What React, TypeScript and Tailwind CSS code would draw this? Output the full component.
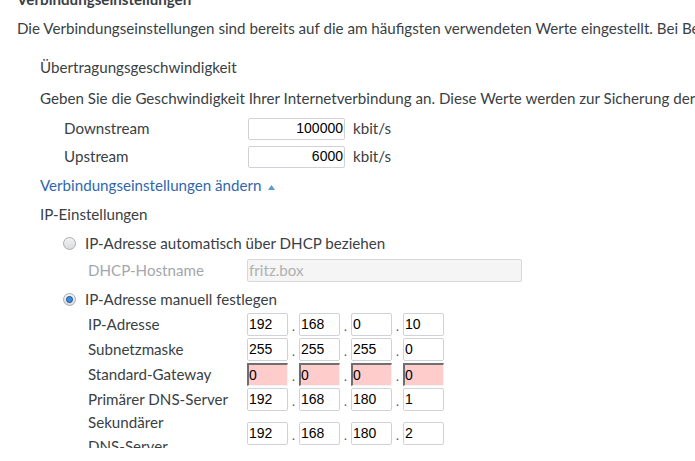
const ipRows = [
  { label: "IP-Adresse", values: ["192", "168", "0", "10"] },
  { label: "Subnetzmaske", values: ["255", "255", "255", "0"] },
  { label: "Standard-Gateway", values: ["0", "0", "0", "0"], invalid: true },
  { label: "Primärer DNS-Server", values: ["192", "168", "180", "1"] },
];

function Radio({ checked }: { checked?: boolean }) {
  return (
    <span className="flex h-[13px] w-[13px] shrink-0 items-center justify-center rounded-full border border-[#a9adb1] bg-gradient-to-b from-[#f2f2f2] to-[#d9dbdd]">
      {checked ? (
        <span className="h-[7px] w-[7px] rounded-full border border-[#1d4f86] bg-[#3a8ee6]" />
      ) : null}
    </span>
  );
}

function IpInputs({ values, invalid }: { values: string[]; invalid?: boolean }) {
  return (
    <div className="flex items-end font-['Liberation_Sans',sans-serif] text-[14px] text-black">
      {values.map((v, i) => (
        <div key={i} className="flex items-end">
          {i > 0 ? <span className="w-[11px] pb-[3px] text-center leading-none text-[#555]">.</span> : null}
          <div
            className={
              invalid
                ? "flex h-[23px] w-[41px] items-center border-t-2 border-l-2 border-r border-b border-t-[#6f6f6f] border-l-[#6f6f6f] border-r-[#f4f4f4] border-b-[#f4f4f4] bg-[#ffcccc] pl-0"
                : "flex h-[23px] w-[41px] items-center rounded-[2px] border border-[#cfd3d7] bg-white pl-[1px]"
            }
          >
            {v}
          </div>
        </div>
      ))}
    </div>
  );
}

export default function App() {
  return (
    <div className="h-[461px] w-[695px] overflow-hidden bg-white">
      <div className="h-[448px] overflow-hidden pl-[17px] font-['Lato',sans-serif] text-[15.15px] text-[#3a4044]">
        <div className="-mt-[11px] h-[20px] whitespace-nowrap font-bold leading-[20px]">Verbindungseinstellungen</div>
        <div className="mt-[9px] h-[20px] whitespace-nowrap leading-[20px]">
          Die Verbindungseinstellungen sind bereits auf die am häufigsten verwendeten Werte eingestellt. Bei Bedarf können Sie die Einstellungen hier ändern.
        </div>

        <div className="pl-[23px]">
          <div className="mt-[19px] h-[20px] leading-[20px]">Übertragungsgeschwindigkeit</div>
          <div className="mt-[11px] h-[20px] whitespace-nowrap leading-[20px]">
            Geben Sie die Geschwindigkeit Ihrer Internetverbindung an. Diese Werte werden zur Sicherung der Qualität benötigt.
          </div>

          <div className="mt-[9px] flex h-[23px] items-center pl-[24px]">
            <span className="w-[184px]">Downstream</span>
            <div className="flex h-[22px] w-[97px] items-center justify-end rounded-[2px] border border-[#cfd3d7] pr-[1px] font-['Liberation_Sans',sans-serif] text-[14px] text-black">
              100000
            </div>
            <span className="ml-[8px]">kbit/s</span>
          </div>
          <div className="mt-[5px] flex h-[23px] items-center pl-[24px]">
            <span className="w-[184px]">Upstream</span>
            <div className="flex h-[22px] w-[97px] items-center justify-end rounded-[2px] border border-[#cfd3d7] pr-[1px] font-['Liberation_Sans',sans-serif] text-[14px] text-black">
              6000
            </div>
            <span className="ml-[8px]">kbit/s</span>
          </div>

          <div className="mt-[7px] flex h-[20px] items-center leading-[20px] text-[#2f66ae]">
            Verbindungseinstellungen ändern
            <svg className="ml-[6px] mt-[4px]" width="7" height="5" viewBox="0 0 7 5">
              <polygon points="3.5,0 7,5 0,5" fill="#5b9ad6" />
            </svg>
          </div>

          <div className="mt-[9px] h-[20px] leading-[20px]">IP-Einstellungen</div>

          <div className="pl-[23px]">
            <div className="mt-[9px] flex h-[20px] items-center gap-[9px] leading-[20px]">
              <Radio />
              <span>IP-Adresse automatisch über DHCP beziehen</span>
            </div>
            <div className="mt-[6px] flex h-[23px] items-center pl-[25px]">
              <span className="w-[159px] text-[#a3a7ab]">DHCP-Hostname</span>
              <div className="flex h-[23px] w-[275px] items-center rounded-[2px] border border-[#d6d9dc] bg-[#f5f5f5] pl-[1px] text-[#b0b0b0]">
                fritz.box
              </div>
            </div>

            <div className="mt-[7px] flex h-[20px] items-center gap-[9px] leading-[20px]">
              <Radio checked />
              <span>IP-Adresse manuell festlegen</span>
            </div>

            <div className="mt-[4px] flex flex-col gap-[2px] pl-[25px]">
              {ipRows.map((r) => (
                <div key={r.label} className="flex h-[23px] items-center">
                  <span className="w-[159px]">{r.label}</span>
                  <IpInputs values={r.values} invalid={r.invalid} />
                </div>
              ))}
              <div className="-mt-[3px] flex">
                <span className="w-[159px] leading-[24px]">
                  Sekundärer
                  <br />
                  DNS-Server
                </span>
                <div className="mt-[12px]">
                  <IpInputs values={["192", "168", "180", "2"]} />
                </div>
              </div>
            </div>
          </div>
        </div>
      </div>
    </div>
  );
}
